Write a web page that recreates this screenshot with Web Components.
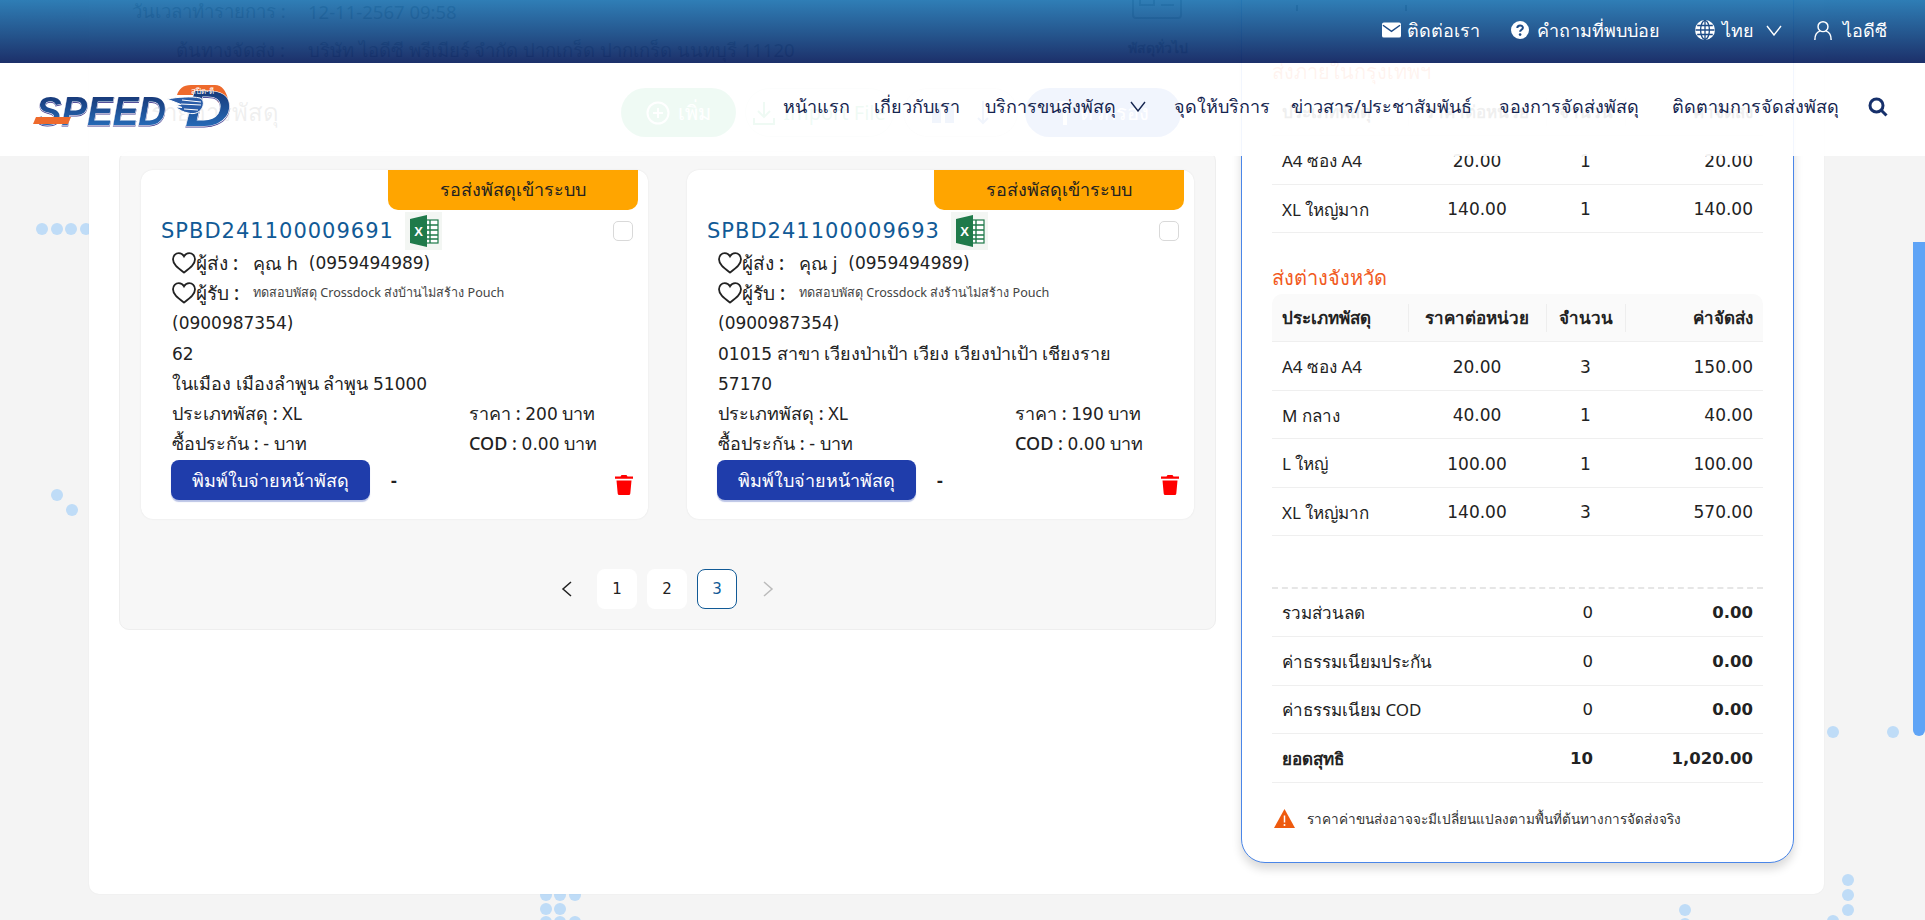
<!DOCTYPE html>
<html lang="th">
<head>
<meta charset="utf-8">
<title>Speed-D</title>
<style>
  html, body { margin: 0; padding: 0; height: 100%; overflow: hidden; }
  body { font-family: "Noto Sans", "Open Sans", "Liberation Sans", sans-serif; color: #222; background: #f4f4f4; }
</style>
</head>
<body>
<page-scroller>
  <site-header slot="top"></site-header>
  <booking-page></booking-page>
</page-scroller>

<script>
const FONT = '"Noto Sans", "Open Sans", "Liberation Sans", sans-serif';
const NUM = '"DejaVu Sans", "Noto Sans", sans-serif';

const icons = {
  mail: '<svg width="20" height="16" viewBox="0 0 20 16"><rect width="20" height="16" rx="2" fill="#fff"/><path d="M1 3l9 6.500L19 3" fill="none" stroke="#1c4a86" stroke-width="1.600"/></svg>',
  help: '<svg width="18" height="18" viewBox="0 0 18 18"><circle cx="9" cy="9" r="9" fill="#fff"/><path d="M6.300 7c0-3.400 5.600-3.400 5.600-.2 0 2-2.800 2-2.800 4" fill="none" stroke="#1c4a86" stroke-width="2"/><circle cx="9.100" cy="13.600" r="1.300" fill="#1c4a86"/></svg>',
  globe: '<svg width="20" height="20" viewBox="0 0 20 20" fill="none" stroke="#1c4a86" stroke-width="1.300"><circle cx="10" cy="10" r="10" fill="#fff" stroke="none"/><ellipse cx="10" cy="10" rx="4.400" ry="9.400"/><path d="M10 .5v19M.5 10h19M2.200 5.500h15.600M2.200 14.500h15.600"/></svg>',
  chev: '<svg width="16" height="11" viewBox="0 0 16 11" fill="none" stroke="currentColor" stroke-width="1.400"><path d="M1 1l7 9 7-9"/></svg>',
  user: '<svg width="21" height="23" viewBox="0 0 21 23" fill="none" stroke="#fff" stroke-width="1.700"><circle cx="10.500" cy="7" r="5.800"/><path d="M1 22.500c0-6 3-9.500 5.800-10.300M20 22.500c0-6-3-9.500-5.800-10.300"/></svg>',
  search: '<svg width="20" height="20" viewBox="0 0 20 20" fill="none" stroke="#16306b" stroke-width="3"><circle cx="8.500" cy="8.500" r="6.500"/><path d="M13.500 13.500L18.500 18.500"/></svg>',
  heart: '<svg width="24" height="22" viewBox="0 0 24 22" fill="none" stroke="#222" stroke-width="1.800"><path d="M12 20.500C6 16 1 12.500 1 7.200 1 3.700 3.600 1.200 6.800 1.200c2.200 0 4.100 1.200 5.200 3.200 1.100-2 3-3.200 5.200-3.200 3.200 0 5.800 2.500 5.800 6 0 5.300-5 8.800-11 13.300z"/></svg>',
  trash: '<svg width="18" height="20" viewBox="0 0 18 20" fill="#f00"><path d="M6.500 0h5l1 1.500H18v2.300H0V1.500h5.500z"/><path d="M1.500 5.500h15l-1.200 13a1.600 1.600 0 0 1-1.600 1.500H4.300a1.600 1.600 0 0 1-1.600-1.500z"/></svg>',
  warn: '<svg width="21" height="19" viewBox="0 0 21 19"><path d="M10.500 0L21 19H0z" fill="#ee5a0e"/><path d="M10.500 6.500v7" stroke="#fff" stroke-width="1.500"/><circle cx="10.500" cy="16" r="1" fill="#fff"/></svg>',
  excel: '<svg width="37" height="38" viewBox="0 0 37 38"><rect width="37" height="38" fill="#f3f6f3"/><rect x="19" y="8" width="14" height="23" fill="#fff" stroke="#1f7a4a" stroke-width="1.200"/><path d="M19 13h14M19 18h14M19 23h14M19 27h14M25 8v23" stroke="#1f7a4a" stroke-width="1.400"/><path d="M5 7l17-4v32L5 31z" fill="#1f7a4a"/><text x="13.500" y="23.500" text-anchor="middle" font-family="Liberation Sans" font-weight="700" font-size="13" fill="#fff">X</text></svg>',
  plus: '<svg width="24" height="24" viewBox="0 0 24 24" fill="none" stroke="#fff" stroke-width="2"><circle cx="12" cy="12" r="10.500"/><path d="M12 7v10M7 12h10"/></svg>',
  down: '<svg width="22" height="24" viewBox="0 0 22 24" fill="none" stroke="#27b46a" stroke-width="2"><path d="M11 1v15M5 10l6 6 6-6M1 17v6h20v-6"/></svg>',
  bars: '<svg width="22" height="20" viewBox="0 0 22 20" fill="#3a6fd0"><rect width="9" height="20"/><rect x="13" width="9" height="20"/></svg>',
  arrow: '<svg width="14" height="24" viewBox="0 0 14 24" fill="none" stroke="#3a6fd0" stroke-width="2"><path d="M7 0v22M2 17l5 5 5-5"/></svg>',
  funnel: '<svg width="14" height="24" viewBox="0 0 14 24" fill="#fff"><path d="M0 0h14v5L9 9v15H5V9L0 5z"/></svg>'
};

customElements.define('page-scroller', class PageScroller extends HTMLElement {
  constructor() {
    super();
    this.attachShadow({mode: 'open'});
    this.shadowRoot.innerHTML = `<style>
      :host { display: block; position: relative; height: 920px; overflow: hidden; }
      .scroll { height: 920px; overflow-y: scroll; overflow-x: hidden; scrollbar-width: none; }
      .top { position: absolute; left: 0; right: 0; top: 0; z-index: 5; }
      .thumb { position: absolute; right: 0; top: 242px; width: 12px; height: 494px; background: #5fa4f6; border-radius: 0 0 6px 6px; z-index: 4; }
    </style>
    <div class="scroll"><slot></slot></div>
    <div class="thumb"></div>
    <div class="top"><slot name="top"></slot></div>`;
  }
  jump(y) {
    this.shadowRoot.querySelector('.scroll').scrollTop = y;
  }
});

customElements.define('site-header', class SiteHeader extends HTMLElement {
  constructor() {
    super();
    this.attachShadow({mode: 'open'});
    this.shadowRoot.innerHTML = `<style>
      :host { display: block; font-family: ${FONT}; }
      .bar {
        height: 63px; box-sizing: border-box; padding: 0 38px 3px 0;
        display: flex; justify-content: flex-end; align-items: center; gap: 31px;
        background: linear-gradient(180deg, rgba(36,119,178,.95) 0%, rgba(28,78,136,.96) 55%, rgba(21,41,101,.97) 100%);
        color: #fff; font-size: 18px;
      }
      .bar span { display: inline-flex; align-items: center; gap: 6px; white-space: nowrap; }
      .nav {
        height: 93px; box-sizing: border-box; padding: 0 37px 6px 32px;
        display: flex; align-items: center; gap: 26px;
        background: rgba(255,255,255,.93); color: #15254f; font-size: 18px;
      }
      .nav .logo { margin-right: auto; display: flex; }
      .nav span { display: inline-flex; align-items: center; justify-content: center; gap: 14px; white-space: nowrap; }
      .nav span.more { justify-content: flex-start; }
    </style>
    <div class="bar">
      <span style="width:98px">${icons.mail}ติดต่อเรา</span>
      <span style="width:153px;gap:8px">${icons.help}คำถามที่พบบ่อย</span>
      <span style="width:88px;gap:7px">${icons.globe}ไทย<span style="margin-left:5px">${icons.chev}</span></span>
      <span style="width:73px;justify-content:flex-end;gap:11px">${icons.user}ไอดีซี</span>
    </div>
    <div class="nav">
      <div class="logo"><speed-logo></speed-logo></div>
      <span style="width:63px">หน้าแรก</span>
      <span style="width:85px">เกี่ยวกับเรา</span>
      <span class="more" style="width:164px">บริการขนส่งพัสดุ ${icons.chev}</span>
      <span style="width:93px">จุดให้บริการ</span>
      <span style="width:175px">ข่าวสาร/ประชาสัมพันธ์</span>
      <span style="width:148px">จองการจัดส่งพัสดุ</span>
      <span style="width:173px">ติดตามการจัดส่งพัสดุ</span>
      ${icons.search}
    </div>`;
  }
});

customElements.define('speed-logo', class SpeedLogo extends HTMLElement {
  constructor() {
    super();
    this.attachShadow({mode: 'open'});
    this.shadowRoot.innerHTML = `<style>
      :host { display: block; width: 200px; height: 44px; }
      svg { display: block; overflow: visible; }
      .word { filter: drop-shadow(0 1px 0 #55509a); }
    </style>
    <svg width="200" height="44" viewBox="0 0 200 44">
      <defs>
        <linearGradient id="b" x1="0" y1="0" x2="0" y2="1"><stop offset="0" stop-color="#142c68"/><stop offset="1" stop-color="#2a78c8"/></linearGradient>
      </defs>
      <path d="M145 10c2-6 6-10 14-10h24c7 0 11 6 13 14l1 9-11-6c-2-4-4-7-8-7z" fill="#ee6a2c"/>
      <text class="word" x="4" y="40" font-family="Liberation Sans" font-style="italic" font-weight="700" font-size="41" textLength="130" lengthAdjust="spacingAndGlyphs" fill="url(#b)" stroke="#fff" stroke-width="1" paint-order="stroke">SPEED</text>
      <path d="M1 39l3-7h35l-3 7z" fill="#ee6a2c"/>
      <text class="word" x="153" y="41" font-family="Liberation Sans" font-style="italic" font-weight="700" font-size="50" textLength="46" lengthAdjust="spacingAndGlyphs" fill="url(#b)" stroke="#fff" stroke-width="1" paint-order="stroke">D</text>
      <path d="M135 14c11-2 24-3 33-1 3 1 4 4 3 8-2 6-8 9-15 7-5-1-9-3-12-6l6 .5-6-2.500 5-.5z" fill="#2a5da8" stroke="#fff" stroke-width="1"/>
      <path d="M150 15l19 2M149 19l20 1M152 24l14 1" stroke="#fff" stroke-width="1"/>
      <text x="159" y="9" font-family="${FONT.replace(/"/g, '')}" font-size="8" fill="#fff">สปีด-ดี</text>
    </svg>`;
  }
});

customElements.define('parcel-card', class ParcelCard extends HTMLElement {
  constructor() {
    super();
    this.attachShadow({mode: 'open'});
    const d = this.dataset;
    const n = s => s.replace(/\d+/g, m => `<span class="n">${m}</span>`);
    const address = d.address.split('|').map(line => `<div>${n(line)}</div>`).join('');
    this.shadowRoot.innerHTML = `<style>
      :host {
        display: block; position: relative; width: 507px; height: 349px; box-sizing: border-box;
        padding: 42px 15px 0 20px; background: #fff; border-radius: 12px; box-shadow: 0 0 2px rgba(0,0,0,.08);
        font-family: ${FONT}; font-size: 18px; line-height: 30px; color: #222;
      }
      .n { font-family: ${NUM}; font-size: 17px; }
      .badge {
        position: absolute; top: 0; right: 10px; width: 250px; height: 40px; border-radius: 0 0 10px 10px;
        background: #ffa500; color: #222; font-size: 18px; font-weight: 500; line-height: 38px; text-align: center;
      }
      .title { display: flex; align-items: center; height: 38px; }
      .code { font-family: ${NUM}; color: #115a96; font-size: 21px; letter-spacing: 1px; margin-right: 12px; width: 232px; white-space: nowrap; }
      .box { margin-left: auto; width: 20px; height: 20px; box-sizing: border-box; border: 1px solid #d9d9d9; border-radius: 5px; background: #fff; }
      .body { padding-left: 11px; margin-top: -2px; }
      .body > div { height: 30px; }
      .who { display: flex; align-items: center; white-space: nowrap; }
      .who b { display: inline-block; width: 57px; font-weight: 500; font-size: 19px; white-space: nowrap; }
      .who svg { flex: none; }
      .who .tel { margin-left: 11px; }
      .small { font-size: 12.600px; color: #444; }
      .two { display: grid; grid-template-columns: 297px 1fr; }
      .two b { font-weight: 500; }
      .body > .act { display: flex; align-items: center; height: 42px; margin-left: -1px; margin-top: 1px; }
      button {
        width: 199px; height: 40px; border: 0; border-radius: 8px; background: #1f3dab; color: #fff;
        font: inherit; font-size: 18px; box-shadow: 0 2px 1px rgba(31,61,171,.3); padding: 0;
      }
      .dash { margin-left: 21px; font-weight: 700; }
      .bin { margin-left: auto; margin-top: 10px; display: flex; }
    </style>
    <div class="badge">รอส่งพัสดุเข้าระบบ</div>
    <div class="title">
      <span class="code">${d.code}</span>${icons.excel}<span class="box"></span>
    </div>
    <div class="body">
      <div class="who">${icons.heart}<b>ผู้ส่ง :</b><span>${d.sender}</span><span class="n tel">(0959494989)</span></div>
      <div class="who">${icons.heart}<b>ผู้รับ :</b><span class="small">${d.receiver}</span></div>
      <div class="n">(0900987354)</div>
      ${address}
      <div class="two"><span><b>ประเภทพัสดุ :</b> XL</span><span><b>ราคา :</b> <span class="n">${d.price}</span> บาท</span></div>
      <div class="two"><span><b>ซื้อประกัน :</b> - บาท</span><span><b>COD :</b> <span class="n">0.00</span> บาท</span></div>
      <div class="act"><button>พิมพ์ใบจ่ายหน้าพัสดุ</button><span class="dash">-</span><span class="bin">${icons.trash}</span></div>
    </div>`;
  }
});

customElements.define('page-nav', class PageNav extends HTMLElement {
  constructor() {
    super();
    this.attachShadow({mode: 'open'});
    this.shadowRoot.innerHTML = `<style>
      :host { display: flex; justify-content: center; align-items: center; gap: 10px; font-family: ${NUM}; font-size: 15px; color: #222; }
      .p { width: 40px; height: 40px; box-sizing: border-box; border-radius: 8px; background: #fff; display: flex; align-items: center; justify-content: center; }
      .on { border: 1px solid #115a96; color: #115a96; }
      svg { display: block; }
      .arrow { display: flex; }
      .arrow.l { width: 26px; }
      .arrow.r { margin-left: 15px; width: 12px; }
    </style>
    <span class="arrow l"><svg width="12" height="16" viewBox="0 0 12 16" fill="none" stroke="#222" stroke-width="1.500"><path d="M10 1L2 8l8 7"/></svg></span>
    <span class="p">1</span><span class="p">2</span><span class="p on">3</span>
    <span class="arrow r"><svg width="12" height="16" viewBox="0 0 12 16" fill="none" stroke="#bbb" stroke-width="1.500"><path d="M2 1l8 7-8 7"/></svg></span>`;
  }
});

customElements.define('rate-table', class RateTable extends HTMLElement {
  constructor() {
    super();
    this.attachShadow({mode: 'open'});
    const rows = JSON.parse(this.dataset.rows);
    this.shadowRoot.innerHTML = `<style>
      :host { display: block; font-family: ${FONT}; font-size: 17px; color: #222; }
      .title { color: #f15a22; font-size: 20px; height: 38px; line-height: 44px; }
      .row, .head { display: grid; grid-template-columns: 136px 138px 79px 138px; align-items: center; box-sizing: border-box; border-bottom: 1px solid #efefef; }
      .head { height: 48px; background: #fafafa; border-radius: 10px 10px 0 0; font-weight: 600; }
      .head span { position: relative; white-space: nowrap; }
      .head span + span::before { content: ""; position: absolute; left: 0; top: 50%; height: 28px; margin-top: -14px; width: 1px; background: #eee; }
      .row { height: 48.500px; padding-top: 2px; }
      .row span + span { font-family: ${NUM}; }
      span { padding: 0 10px; }
      .c { text-align: center; }
      .r { text-align: right; }
    </style>
    <div class="title">${this.dataset.title}</div>
    <div class="head"><span>ประเภทพัสดุ</span><span class="c">ราคาต่อหน่วย</span><span class="c">จำนวน</span><span class="r">ค่าจัดส่ง</span></div>
    ${rows.map(r => `<div class="row"><span>${r[0]}</span><span class="c">${r[1]}</span><span class="c">${r[2]}</span><span class="r">${r[3]}</span></div>`).join('')}`;
  }
});

customElements.define('rate-summary', class RateSummary extends HTMLElement {
  constructor() {
    super();
    this.attachShadow({mode: 'open'});
    this.shadowRoot.innerHTML = `<style>
      :host { display: block; font-family: ${FONT}; font-size: 17px; color: #222; border-top: 2px dashed #e6e6e6; }
      .row { display: grid; grid-template-columns: 1fr 60px 160px; height: 48.500px; align-items: center; padding: 1px 10px 0; box-sizing: border-box; border-bottom: 1px solid #efefef; }
      .row:first-child { height: 46.500px; }
      .row span:nth-child(n+2) { text-align: right; font-family: ${NUM}; font-size: 16.500px; }
      .row span:nth-child(3) { font-weight: 600; }
      .total { font-weight: 600; }
      .note { display: flex; align-items: center; gap: 12px; margin-top: 25px; padding-left: 2px; font-size: 13.600px; color: #333; }
    </style>
    <div class="row"><span>รวมส่วนลด</span><span>0</span><span>0.00</span></div>
    <div class="row"><span>ค่าธรรมเนียมประกัน</span><span>0</span><span>0.00</span></div>
    <div class="row"><span>ค่าธรรมเนียม COD</span><span>0</span><span>0.00</span></div>
    <div class="row total"><span>ยอดสุทธิ</span><span>10</span><span>1,020.00</span></div>
    <div class="note">${icons.warn}<span>ราคาค่าขนส่งอาจจะมีเปลี่ยนแปลงตามพื้นที่ต้นทางการจัดส่งจริง</span></div>`;
  }
});

customElements.define('booking-page', class BookingPage extends HTMLElement {
  constructor() {
    super();
    this.attachShadow({mode: 'open'});
    this.shadowRoot.innerHTML = `<style>
      :host { display: block; position: relative; height: 1713px; background: #f4f4f4; font-family: ${FONT}; color: #222; }
      .dots { position: absolute; left: 0; top: 450px; }
      .sheet {
        position: absolute; left: 89px; top: 300px; width: 1735px; height: 1044px; box-sizing: border-box;
        background: #fff; border-radius: 10px; box-shadow: 0 0 2px rgba(0,0,0,.06);
        padding: 0 30px; display: grid; grid-template-columns: 1097px 553px; column-gap: 25px; align-items: start;
      }
      .info { box-sizing: border-box; height: 238px; padding: 142px 0 0 13px; font-size: 18.500px; position: relative; }
      .line { display: grid; grid-template-columns: 153px 1fr; column-gap: 23px; height: 39px; align-items: center; white-space: nowrap; }
      .line span:first-child { text-align: right; }
      .tools { display: flex; align-items: center; height: 49px; margin: 0 35px 14px 0; }
      .tools h2 { font-size: 24px; font-weight: 400; margin: 0 auto 0 32px; white-space: nowrap; }
      .pill { height: 49px; box-sizing: border-box; border-radius: 25px; display: flex; align-items: center; justify-content: center; gap: 8px; font-size: 20px; white-space: nowrap; margin-left: 9px; }
      .list { background: #f7f7f7; border: 1px solid #eee; border-radius: 10px; box-sizing: border-box; height: 479px; padding: 18px 21px 0; }
      .cards { display: grid; grid-template-columns: 507px 507px; column-gap: 39px; margin-bottom: 50px; }
      .side {
        box-sizing: border-box; position: relative; height: 1014px; margin-top: -1px; padding: 0 30px; background: #fff;
        border: 1px solid #4a86e8; border-radius: 0 0 24px 24px; box-shadow: 0 6px 10px rgba(0,0,0,.15);
      }
      .tick { position: absolute; top: 155px; width: 2px; height: 6px; background: #333; }
      .gap { height: 23px; }
      .gap2 { height: 50.500px; }
      .general { position: absolute; left: 1009px; top: 133px; width: 58px; font-size: 14px; font-weight: 700; line-height: 20px; white-space: nowrap; text-align: center; }
      .general svg { display: block; margin: 0 auto 19px; }
    </style>
    <svg class="dots" width="1925" height="920" fill="#bfdcf7">
      <circle cx="42" cy="229" r="6"/><circle cx="57" cy="229" r="6"/><circle cx="71" cy="229" r="6"/><circle cx="86" cy="229" r="6"/>
      <circle cx="57" cy="495" r="6"/><circle cx="72" cy="510" r="6"/>
      <circle cx="1833" cy="732" r="6"/><circle cx="1893" cy="732" r="6"/>
      <circle cx="1848" cy="880" r="6"/><circle cx="1848" cy="895" r="6"/><circle cx="1848" cy="910" r="6"/>
      <circle cx="1685" cy="910" r="6"/><circle cx="1833" cy="921" r="6"/><circle cx="1685" cy="924" r="6"/>
      <circle cx="546" cy="895" r="6"/><circle cx="560" cy="895" r="6"/><circle cx="575" cy="895" r="6"/>
      <circle cx="546" cy="909" r="6"/><circle cx="560" cy="909" r="6"/>
      <circle cx="546" cy="922" r="6"/><circle cx="560" cy="922" r="6"/><circle cx="575" cy="922" r="6"/>
    </svg>
    <div class="sheet">
      <div>
        <div class="info">
          <div class="line"><span>วันเวลาทำรายการ :</span><span>12-11-2567 09:58</span></div>
          <div class="line"><span>ต้นทางจัดส่ง :</span><span>บริษัท ไอดีซี พรีเมียร์ จำกัด ปากเกร็ด ปากเกร็ด นนทบุรี 11120</span></div>
          <div class="general"><svg width="50" height="36" viewBox="0 0 50 36" fill="none" stroke="#555" stroke-width="2"><rect x="1" y="1" width="48" height="34" rx="3"/><rect x="8" y="10" width="14" height="12"/><path d="M29 10h13M29 16h13M29 22h13"/></svg>พัสดุทั่วไป</div>
        </div>
        <div class="tools">
          <h2>รายการพัสดุ</h2>
          <div class="pill" style="width:115px;background:#27b46a;color:#fff">${icons.plus}เพิ่ม</div>
          <div class="pill" style="width:149px;border:1px solid #d5e5dd;color:#27b46a">${icons.down}Import File</div>
          <div class="pill" style="width:115px;border:1px solid #ddd;gap:22px">${icons.bars}${icons.arrow}</div>
          <div class="pill" style="width:156px;margin-left:7px;background:#3f6fe0;color:#fff">${icons.funnel}ตัวกรอง</div>
        </div>
        <div class="list">
          <div class="cards">
            <parcel-card data-code="SPBD241100009691" data-sender="คุณ h" data-receiver="ทดสอบพัสดุ Crossdock ส่งบ้านไม่สร้าง Pouch" data-address="62|ในเมือง เมืองลำพูน ลำพูน 51000" data-price="200"></parcel-card>
            <parcel-card data-code="SPBD241100009693" data-sender="คุณ j" data-receiver="ทดสอบพัสดุ Crossdock ส่งร้านไม่สร้าง Pouch" data-address="01015 สาขา เวียงป่าเป้า เวียง เวียงป่าเป้า เชียงราย|57170" data-price="190"></parcel-card>
          </div>
          <page-nav></page-nav>
        </div>
      </div>
      <div class="side">
        <span class="tick" style="left:54px"></span><span class="tick" style="left:163px"></span>
        <div style="height:200px"></div>
        <rate-table data-title="ส่งภายในกรุงเทพฯ" data-rows='[["A4 ซอง A4","20.00","1","20.00"],["XL ใหญ่มาก","140.00","1","140.00"]]'></rate-table>
        <div class="gap"></div>
        <rate-table data-title="ส่งต่างจังหวัด" data-rows='[["A4 ซอง A4","20.00","3","150.00"],["M กลาง","40.00","1","40.00"],["L ใหญ่","100.00","1","100.00"],["XL ใหญ่มาก","140.00","3","570.00"]]'></rate-table>
        <div class="gap2"></div>
        <rate-summary></rate-summary>
      </div>
    </div>`;
  }
});

document.querySelector('page-scroller').jump(450);
</script>
</body>
</html>
